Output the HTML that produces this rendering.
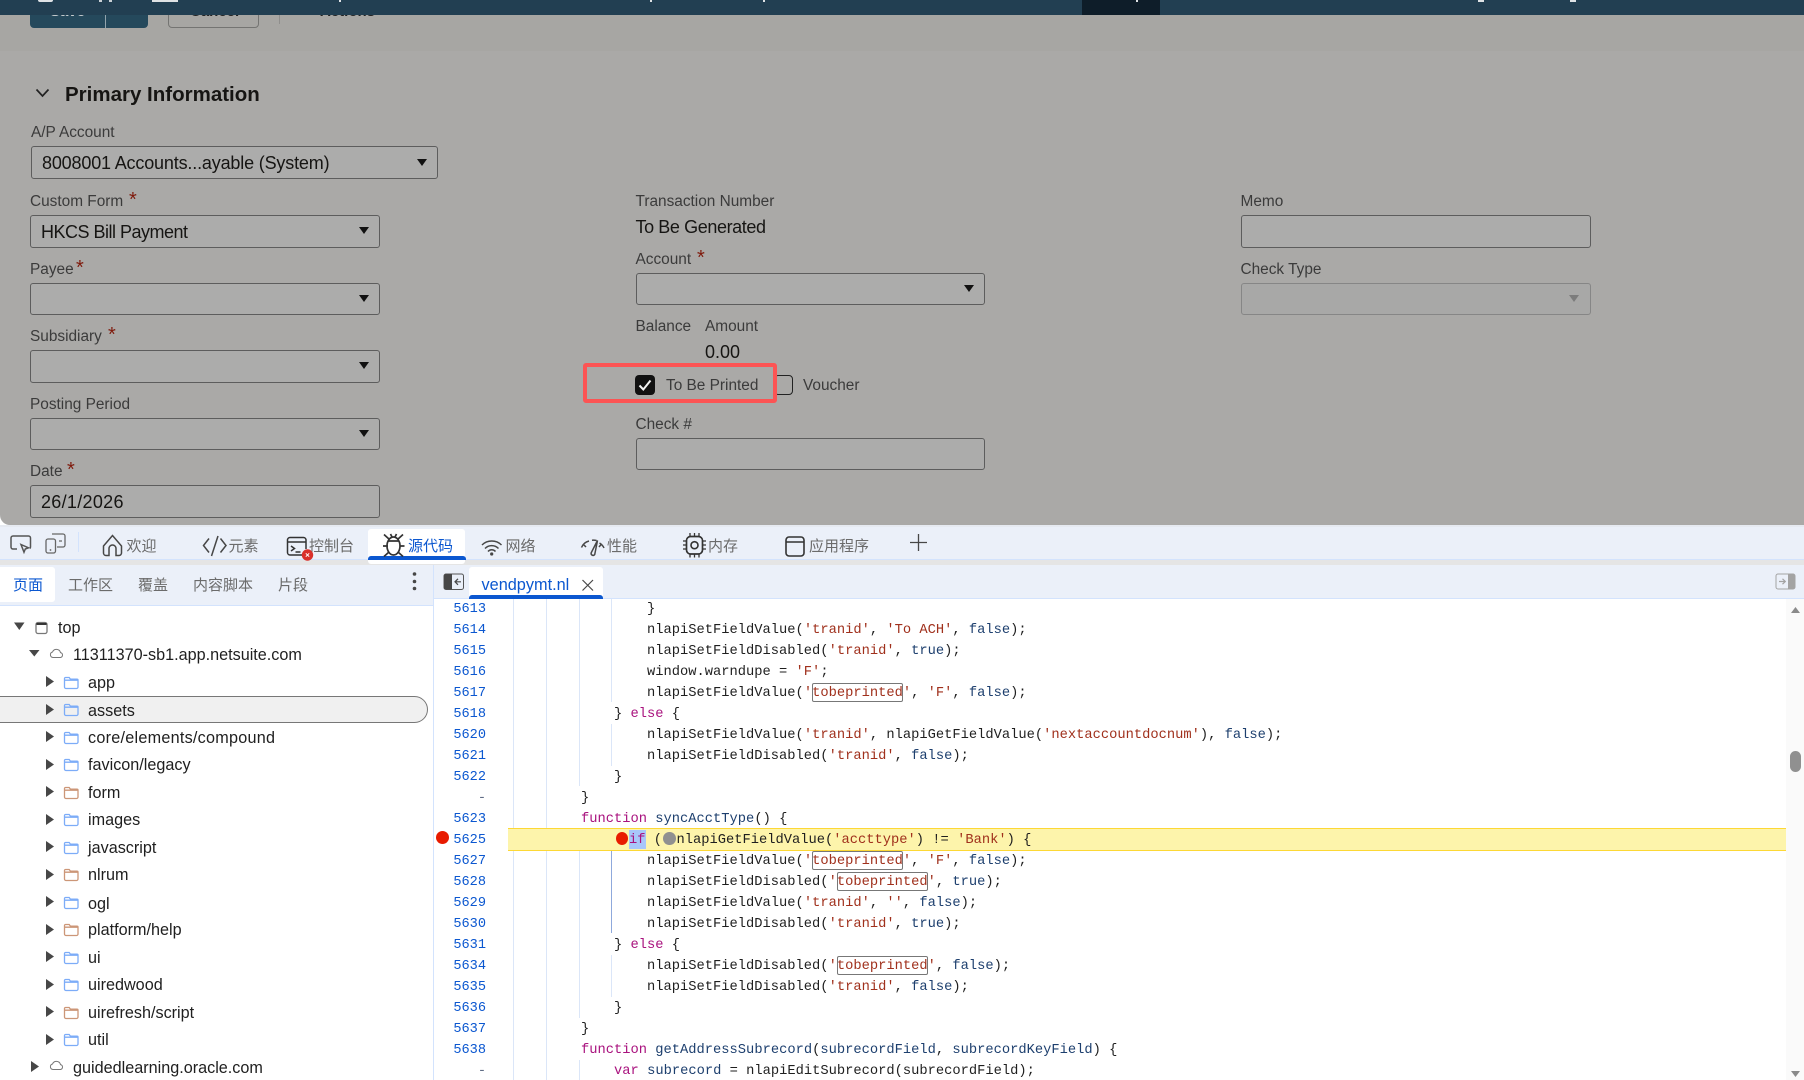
<!DOCTYPE html>
<html><head><meta charset="utf-8"><title>vendpymt</title>
<style>
html,body{margin:0;padding:0;width:1804px;height:1080px;overflow:hidden;background:#fff}
body{position:relative;font-family:"Liberation Sans","Noto Sans CJK SC",sans-serif;color:#1f1f1f}
.a{position:absolute}
.t{position:absolute;white-space:pre;line-height:20px;height:20px}
.l{font-size:15.4px;color:#3b3b3b;margin-top:1px}
.v{font-size:18px;color:#161513}
.st{color:#7f1a0c;font-size:20px;position:absolute;line-height:20px}
.f{position:absolute;box-sizing:border-box;border:1.3px solid #5d5d5d;border-radius:3px;background:#acacab}
.ar{position:absolute;width:0;height:0;border-left:5.5px solid transparent;border-right:5.5px solid transparent;border-top:7.5px solid #111}
.tb{font-size:15px;color:#6b6b6b;font-family:"Liberation Sans","Noto Sans CJK SC",sans-serif;margin-top:1px}
.tr{font-size:16.2px;color:#1f1f1f;margin-top:1px}
.tr.m0{margin-top:0}
.r{position:absolute;left:515px;height:21px;line-height:21px;white-space:pre;font-family:"Liberation Mono",monospace;font-size:13.75px;color:#1f1f1f;margin-top:2px}
.n{position:absolute;left:440px;width:46px;text-align:right;height:21px;line-height:21px;font-family:"Liberation Mono",monospace;font-size:13.6px;color:#0b57d0;margin-top:2px}
.k{color:#a9127e}.s{color:#a0301c}.b{color:#1d3f6e}
.x{display:inline-block;box-sizing:border-box;height:19px;line-height:21px;box-shadow:inset 0 0 0 1px #777;border-radius:2px}
</style></head><body>
<!-- page area -->
<div class="a" style="left:0;top:0;width:1804px;height:525px;background:#aaa9a7;border-radius:0 0 0 10px;overflow:hidden">
 <div class="a" style="left:0;top:0;width:1804px;height:51px;background:#a7a6a3"></div>
 <div class="a" style="left:30px;top:0;width:118px;height:28px;background:#25495c;border-radius:0 0 4px 4px"></div>
 <div class="a" style="left:105px;top:15px;width:1px;height:13px;background:#93a4ad"></div>
 <div class="t" style="left:50px;top:2px;font-size:15px;color:#c7cdd0;font-weight:bold">Save</div>
 <div class="a" style="left:168px;top:0;width:91px;height:28px;box-sizing:border-box;border:1px solid #747472;border-radius:0 0 4px 4px"></div>
 <div class="t" style="left:190px;top:2px;font-size:15px;color:#222;font-weight:bold">Cancel</div>
 <div class="a" style="left:279px;top:10px;width:1px;height:14px;background:#8f8e8c"></div>
 <div class="t" style="left:320px;top:2px;font-size:15px;color:#222;font-weight:bold">Actions</div>
 <div class="a" style="left:0;top:0;width:1804px;height:15px;background:#223f52"></div>
 <div class="a" style="left:1082px;top:0;width:78px;height:15px;background:#0e1d29"></div>
 <div class="a" style="left:38px;top:0;width:15px;height:1.5px;background:#dfe3e6;border-radius:0 0 8px 8px"></div>
 <div class="a" style="left:99px;top:0;width:3px;height:2px;background:#c9d0d5"></div>
 <div class="a" style="left:109px;top:0;width:3px;height:2px;background:#c9d0d5"></div>
 <div class="a" style="left:152px;top:0;width:26px;height:2px;background:#dfe2e4"></div>
 <div class="a" style="left:339px;top:0;width:2px;height:1.5px;background:#dfe3e6"></div>
 <div class="a" style="left:650px;top:0;width:2px;height:1.5px;background:#dfe3e6"></div>
 <div class="a" style="left:763px;top:0;width:2px;height:1.5px;background:#dfe3e6"></div>
 <div class="a" style="left:1136px;top:0;width:2px;height:2px;background:#dfe3e6"></div>
 <div class="a" style="left:1478px;top:0;width:6px;height:1.5px;background:#dfe3e6"></div>
 <div class="a" style="left:1570px;top:0;width:6px;height:1.5px;background:#dfe3e6"></div>

 <svg class="a" style="left:0;top:0" width="100" height="120"><path d="M36.5 89.5l6 6.5 6-6.5" fill="none" stroke="#222" stroke-width="1.7"/></svg>
 <div class="t" style="left:65px;top:84.500px;font-size:20.500px;font-weight:bold;color:#161513">Primary Information</div>

 <div class="t l" style="left:31px;top:122px">A/P Account</div>
 <div class="f" style="left:31px;top:146px;width:407px;height:33px"></div><div class="ar" style="left:417px;top:159px"></div>
 <div class="t v" style="left:42px;top:153px;letter-spacing:-.17px">8008001 Accounts...ayable (System)</div>

 <div class="t l" style="left:30px;top:191px">Custom Form</div><div class="st" style="left:129px;top:190px">*</div>
 <div class="f" style="left:30px;top:215px;width:350px;height:33px"></div><div class="ar" style="left:359px;top:227px"></div>
 <div class="t v" style="left:41px;top:222px;letter-spacing:-.5px">HKCS Bill Payment</div>

 <div class="t l" style="left:30px;top:259px">Payee</div><div class="st" style="left:76px;top:258px">*</div>
 <div class="f" style="left:30px;top:283px;width:350px;height:32px"></div><div class="ar" style="left:359px;top:295px"></div>

 <div class="t l" style="left:30px;top:326px">Subsidiary</div><div class="st" style="left:108px;top:325px">*</div>
 <div class="f" style="left:30px;top:350px;width:350px;height:33px"></div><div class="ar" style="left:359px;top:362px"></div>

 <div class="t l" style="left:30px;top:394px">Posting Period</div>
 <div class="f" style="left:30px;top:418px;width:350px;height:32px"></div><div class="ar" style="left:359px;top:430px"></div>

 <div class="t l" style="left:30px;top:461px">Date</div><div class="st" style="left:67px;top:460px">*</div>
 <div class="f" style="left:30px;top:485px;width:350px;height:33px"></div>
 <div class="t v" style="left:41px;top:492px;letter-spacing:.3px">26/1/2026</div>

 <div class="t l" style="left:635.5px;top:191px">Transaction Number</div>
 <div class="t v" style="left:635.5px;top:217px;letter-spacing:-.4px">To Be Generated</div>
 <div class="t l" style="left:635.5px;top:249px">Account</div><div class="st" style="left:697px;top:248px">*</div>
 <div class="f" style="left:635.5px;top:273px;width:349.5px;height:32px"></div><div class="ar" style="left:964px;top:285px"></div>
 <div class="t l" style="left:635.5px;top:316px">Balance</div>
 <div class="t l" style="left:705px;top:316px">Amount</div>
 <div class="t v" style="left:705px;top:342px">0.00</div>

 <div class="a" style="left:635px;top:375px;width:20px;height:20px;background:#111;border-radius:4px"></div>
 <svg class="a" style="left:635px;top:375px" width="20" height="20"><path d="M4.5 10.5l3.8 4L15.5 5.5" fill="none" stroke="#f2f2f2" stroke-width="2"/></svg>
 <div class="t l" style="left:666px;top:375px">To Be Printed</div>
 <div class="a" style="left:774px;top:375px;width:19px;height:20px;box-sizing:border-box;border:1.3px solid #222;border-radius:4px"></div>
 <div class="t l" style="left:803px;top:375px">Voucher</div>
 <div class="a" style="left:583px;top:363px;width:194px;height:40px;box-sizing:border-box;border:4px solid #fc5454;border-radius:3px"></div>

 <div class="t l" style="left:635.5px;top:414px">Check #</div>
 <div class="f" style="left:635.5px;top:438px;width:349.5px;height:32px"></div>

 <div class="t l" style="left:1240.5px;top:191px">Memo</div>
 <div class="f" style="left:1240.5px;top:215px;width:350px;height:33px"></div>
 <div class="t l" style="left:1240.5px;top:259px">Check Type</div>
 <div class="f" style="left:1240.5px;top:283px;width:350px;height:32px;border-color:#868686;background:#a8a8a7"></div>
 <div class="ar" style="left:1569px;top:295px;border-top-color:#7c7c7c"></div>
</div>

<!-- devtools bars -->
<div class="a" style="left:0;top:525px;width:1804px;height:2px;background:#e6eaf1"></div>
<div class="a" style="left:0;top:527px;width:1804px;height:32px;background:#ebf0f9"></div>
<div class="a" style="left:0;top:559px;width:1804px;height:1px;background:#d3e3fd"></div>
<div class="a" style="left:0;top:560px;width:1804px;height:5px;background:#e5e5e5"></div>
<div class="a" style="left:0;top:565px;width:433px;height:40px;background:#ebf0f9"></div>
<div class="a" style="left:0;top:605px;width:433px;height:1px;background:#d3e3fd"></div>
<div class="a" style="left:433px;top:565px;width:1371px;height:33px;background:#ebf0f9"></div>
<div class="a" style="left:433px;top:598px;width:1371px;height:1px;background:#d3e3fd"></div>
<div class="a" style="left:433px;top:565px;width:1px;height:515px;background:#d3e3fd"></div>

<div class="a" style="left:368px;top:529px;width:97px;height:35px;background:#fff;border-radius:3px"></div>
<div class="a" style="left:367.5px;top:556px;width:98px;height:4px;background:#0b57d0;border-radius:3px 3px 0 0"></div>
<div class="a" style="left:0;top:567px;width:55px;height:35px;background:#fff;border-radius:0 3px 3px 0"></div>
<div class="a" style="left:469px;top:567px;width:134px;height:31px;background:#fff;border-radius:3px 3px 0 0"></div>
<div class="a" style="left:469px;top:595px;width:134px;height:3.5px;background:#0b57d0;border-radius:3px 3px 0 0"></div>

<!-- toolbar labels -->
<div class="t tb" style="left:126.500px;top:536px">欢迎</div>
<div class="t tb" style="left:228.500px;top:536px">元素</div>
<div class="t tb" style="left:309px;top:536px">控制台</div>
<div class="t tb" style="left:408px;top:536px;color:#0b57d0">源代码</div>
<div class="t tb" style="left:505.5px;top:536px">网络</div>
<div class="t tb" style="left:607px;top:536px">性能</div>
<div class="t tb" style="left:708px;top:536px">内存</div>
<div class="t tb" style="left:809px;top:536px">应用程序</div>

<div class="t tb" style="left:13px;top:575px;color:#0b57d0">页面</div>
<div class="t tb" style="left:68px;top:575px">工作区</div>
<div class="t tb" style="left:138px;top:575px">覆盖</div>
<div class="t tb" style="left:193px;top:575px">内容脚本</div>
<div class="t tb" style="left:278px;top:575px">片段</div>

<div class="t" style="left:481.5px;top:575px;font-size:16.300px;color:#0b57d0">vendpymt.nl</div>

<!-- tree -->
<div class="a" style="left:-2px;top:696px;width:430px;height:27px;box-sizing:border-box;background:#f0f0f0;border:1px solid #777;border-radius:0 13.5px 13.5px 0"></div>
<div class="t tr" style="left:58px;top:617px">top</div>
<div class="t tr m0" style="left:73px;top:645px">11311370-sb1.app.netsuite.com</div>
<div class="t tr" style="left:88px;top:672px">app</div>
<div class="t tr" style="left:88px;top:700px">assets</div>
<div class="t tr" style="left:88px;top:727px;letter-spacing:.25px">core/elements/compound</div>
<div class="t tr m0" style="left:88px;top:755px">favicon/legacy</div>
<div class="t tr" style="left:88px;top:782px">form</div>
<div class="t tr m0" style="left:88px;top:810px">images</div>
<div class="t tr" style="left:88px;top:837px">javascript</div>
<div class="t tr m0" style="left:88px;top:865px">nlrum</div>
<div class="t tr" style="left:88px;top:893px">ogl</div>
<div class="t tr m0" style="left:88px;top:920px">platform/help</div>
<div class="t tr m0" style="left:88px;top:948px">ui</div>
<div class="t tr m0" style="left:88px;top:975px">uiredwood</div>
<div class="t tr m0" style="left:88px;top:1003px">uirefresh/script</div>
<div class="t tr m0" style="left:88px;top:1030px">util</div>
<div class="t tr" style="left:73px;top:1057px">guidedlearning.oracle.com</div>

<!-- code area -->
<div class="a" style="left:1786px;top:599px;width:18px;height:481px;background:#fafafa"></div>
<div class="a" style="left:508px;top:828px;width:1278px;height:23px;box-sizing:border-box;background:#fdf4ab;border-top:1px solid #fdd835;border-bottom:1px solid #fdd835"></div>
<div class="a" style="left:513px;top:599px;width:1px;height:229px;background:#dbe6f8"></div>
<div class="a" style="left:513px;top:851px;width:1px;height:229px;background:#dbe6f8"></div>
<div class="a" style="left:546px;top:599px;width:1px;height:229px;background:#dbe6f8"></div>
<div class="a" style="left:546px;top:851px;width:1px;height:229px;background:#dbe6f8"></div>
<div class="a" style="left:578.5px;top:599px;width:1px;height:187px;background:#dbe6f8"></div>
<div class="a" style="left:578.5px;top:851px;width:1px;height:167px;background:#dbe6f8"></div>
<div class="a" style="left:578.5px;top:1060px;width:1px;height:20px;background:#dbe6f8"></div>
<div class="a" style="left:611px;top:599px;width:1px;height:103px;background:#dbe6f8"></div>
<div class="a" style="left:611px;top:724px;width:1px;height:42px;background:#dbe6f8"></div>
<div class="a" style="left:611px;top:851px;width:1px;height:82px;background:#8fa9dc"></div>
<div class="a" style="left:611px;top:955px;width:1px;height:42px;background:#dbe6f8"></div>

<div class="n" style="top:597px">5613</div>
<div class="n" style="top:618px">5614</div>
<div class="n" style="top:639px">5615</div>
<div class="n" style="top:660px">5616</div>
<div class="n" style="top:681px">5617</div>
<div class="n" style="top:702px">5618</div>
<div class="n" style="top:723px">5620</div>
<div class="n" style="top:744px">5621</div>
<div class="n" style="top:765px">5622</div>
<div class="n" style="top:786px;color:#5f6c85">-</div>
<div class="n" style="top:807px">5623</div>
<div class="n" style="top:828px">5625</div>
<div class="n" style="top:849px">5627</div>
<div class="n" style="top:870px">5628</div>
<div class="n" style="top:891px">5629</div>
<div class="n" style="top:912px">5630</div>
<div class="n" style="top:933px">5631</div>
<div class="n" style="top:954px">5634</div>
<div class="n" style="top:975px">5635</div>
<div class="n" style="top:996px">5636</div>
<div class="n" style="top:1017px">5637</div>
<div class="n" style="top:1038px">5638</div>
<div class="n" style="top:1059px;color:#5f6c85">-</div>

<div class="r" style="top:597px">                }</div>
<div class="r" style="top:618px">                nlapiSetFieldValue(<span class="s">'tranid'</span>, <span class="s">'To ACH'</span>, <span class="b">false</span>);</div>
<div class="r" style="top:639px">                nlapiSetFieldDisabled(<span class="s">'tranid'</span>, <span class="b">true</span>);</div>
<div class="r" style="top:660px">                window.warndupe = <span class="s">'F'</span>;</div>
<div class="r" style="top:681px">                nlapiSetFieldValue(<span class="s">'<span class="x">tobeprinted</span>'</span>, <span class="s">'F'</span>, <span class="b">false</span>);</div>
<div class="r" style="top:702px">            } <span class="k">else</span> {</div>
<div class="r" style="top:723px">                nlapiSetFieldValue(<span class="s">'tranid'</span>, nlapiGetFieldValue(<span class="s">'nextaccountdocnum'</span>), <span class="b">false</span>);</div>
<div class="r" style="top:744px">                nlapiSetFieldDisabled(<span class="s">'tranid'</span>, <span class="b">false</span>);</div>
<div class="r" style="top:765px">            }</div>
<div class="r" style="top:786px">        }</div>
<div class="r" style="top:807px">        <span class="k">function</span> <span class="b">syncAcctType</span>() {</div>
<div class="a" style="left:629px;top:830px;width:17px;height:19px;background:#a8c7fa"></div>
<div class="a" style="left:616px;top:832px;width:12px;height:13px;border-radius:50%;background:#e81b00"></div>
<div class="a" style="left:663px;top:832px;width:12.5px;height:13px;border-radius:50%;background:#909090"></div>
<div class="r" style="top:828px;left:629px"><span class="k">if</span> (</div>
<div class="r" style="top:828px;left:676.5px">nlapiGetFieldValue(<span class="s">'accttype'</span>) != <span class="s">'Bank'</span>) {</div>
<div class="r" style="top:849px">                nlapiSetFieldValue(<span class="s">'<span class="x">tobeprinted</span>'</span>, <span class="s">'F'</span>, <span class="b">false</span>);</div>
<div class="r" style="top:870px">                nlapiSetFieldDisabled(<span class="s">'<span class="x">tobeprinted</span>'</span>, <span class="b">true</span>);</div>
<div class="r" style="top:891px">                nlapiSetFieldValue(<span class="s">'tranid'</span>, <span class="s">''</span>, <span class="b">false</span>);</div>
<div class="r" style="top:912px">                nlapiSetFieldDisabled(<span class="s">'tranid'</span>, <span class="b">true</span>);</div>
<div class="r" style="top:933px">            } <span class="k">else</span> {</div>
<div class="r" style="top:954px">                nlapiSetFieldDisabled(<span class="s">'<span class="x">tobeprinted</span>'</span>, <span class="b">false</span>);</div>
<div class="r" style="top:975px">                nlapiSetFieldDisabled(<span class="s">'tranid'</span>, <span class="b">false</span>);</div>
<div class="r" style="top:996px">            }</div>
<div class="r" style="top:1017px">        }</div>
<div class="r" style="top:1038px">        <span class="k">function</span> <span class="b">getAddressSubrecord</span>(<span class="b">subrecordField</span>, <span class="b">subrecordKeyField</span>) {</div>
<div class="r" style="top:1059px">            <span class="k">var</span> <span class="b">subrecord</span> = nlapiEditSubrecord(subrecordField);</div>

<div class="a" style="left:436px;top:831px;width:13px;height:13px;border-radius:50%;background:#e81b00"></div>
<div class="a" style="left:1790px;top:751px;width:11px;height:21px;border-radius:5.5px;background:#909090"></div>

<!-- icons -->
<svg class="a" style="left:0;top:0" width="1804" height="1080" fill="none" stroke="#474747" stroke-width="1.5">
 <defs>
  <g id="fb"><path d="M65.6 1.5h3.6l1.2 1.6h6.6a1 1 0 0 1 1 1V11a1.5 1.5 0 0 1-1.5 1.5H66a1.5 1.5 0 0 1-1.5-1.5V2.6a1 1 0 0 1 1.1-1.1zM64.6 4.2h13.6" stroke-width="1.3"/></g>
  <path id="ra" d="M46 0l8 5.5-8 5.5z" fill="#474747" stroke="none"/>
 </defs>
 <!-- toolbar -->
 <path d="M17 549H13a2 2 0 0 1-2-2V538a2 2 0 0 1 2-2h15.500a2 2 0 0 1 2 2v9a2 2 0 0 1-.7 1.500" stroke="#555"/>
 <path d="M21 544.500l7.500 3.300-3.200 1.200-1.300 3.200z" stroke="#555"/>
 <path d="M52 534h11a2 2 0 0 1 2 2v9a2 2 0 0 1-2 2h-6M59 541h3" stroke="#666" stroke-width="1.300"/>
 <rect x="46" y="539" width="9.500" height="14" rx="2" stroke="#666" stroke-width="1.300"/>
 <circle cx="50.500" cy="550" r=".9" fill="#666" stroke="none"/>
 <path d="M78.500 532v20" stroke="#d3e3fd" stroke-width="1"/>
 <path d="M103.500 546l9-10.500 9 10.500v7a2.500 2.500 0 0 1-2.500 2.500h-3v-7a3.500 3.500 0 0 0-7 0v7h-3a2.500 2.500 0 0 1-2.500-2.500z"/>
 <path d="M209 538.500l-5.500 7 5.500 7M218 536l-6.500 20M220.500 538.500l5.500 7-5.500 7"/>
 <path d="M304 555h-14a2.500 2.500 0 0 1-2.500-2.500V540a2.500 2.500 0 0 1 2.500-2.500h13.500A2.500 2.500 0 0 1 306 540v9M287.500 542h18.500" stroke="#333"/>
 <path d="M291 546l3.500 2.500-3.500 2.500M295.500 552h5" stroke="#333"/>
 <circle cx="307.500" cy="555" r="5.700" fill="#d9302c" stroke="none"/>
 <path d="M305.800 553.300l3.400 3.400m0-3.400l-3.400 3.400" stroke="#fff" stroke-width="1"/>
 <ellipse cx="393.500" cy="546" rx="6.500" ry="9" stroke="#333" stroke-width="1.700"/>
 <path d="M388 541h11M384 534.500l5.500 5M403 534.500l-5.500 5M383 546h5M404.500 546h-5M384 556.500l5-4.500M403 556.500l-5-4.500M390.500 534l1.500 3M396.500 534l-1.500 3" stroke="#333" stroke-width="1.700"/>
 <path d="M482 545a14 14 0 0 1 19.500 0M485 548.500a9.500 9.500 0 0 1 13.500 0M488 551.500a5 5 0 0 1 7.500 0"/>
 <circle cx="491.700" cy="554" r="1.600" fill="#474747" stroke="none"/>
 <path d="M581.500 547.500a11 11 0 0 1 7.500-6.500M592 540.200a12 12 0 0 1 4.500.3M599.500 543a11 11 0 0 1 4.500 5M583 544l3 3M601.500 544l-2.500 3"/>
 <path d="M597.500 540.500l-6.300 12.300a2 2 0 0 0 3.500 1.800z"/>
 <rect x="686.500" y="536.500" width="16" height="17.500" rx="4" stroke-width="1.700" stroke="#333"/>
 <circle cx="694.500" cy="545.200" r="3.500" stroke="#333" stroke-width="1.600"/>
 <path d="M690 533v3M694.500 533v3M699 533v3M690 554.500v3M694.500 554.500v3M699 554.500v3M683 541h3M683 545h3M683 549h3M703 541h3M703 545h3M703 549h3" stroke="#333" stroke-width="1.300"/>
 <rect x="786" y="537" width="18" height="19" rx="3" stroke="#333" stroke-width="1.600"/>
 <path d="M786 542h18" stroke="#333" stroke-width="1.500"/>
 <path d="M910 542.500h17M918.500 534v17" stroke="#474747" stroke-width="1.300"/>
 <!-- panel dots -->
 <circle cx="414.500" cy="574" r="1.800" fill="#474747" stroke="none"/>
 <circle cx="414.500" cy="581.500" r="1.800" fill="#474747" stroke="none"/>
 <circle cx="414.500" cy="588.500" r="1.800" fill="#474747" stroke="none"/>
 <!-- sidebar toggle -->
 <rect x="444" y="574" width="19.500" height="15.500" rx="2" stroke="#555" stroke-width="1"/>
 <path d="M446 574h6v15.500h-6a2 2 0 0 1-2-2V576a2 2 0 0 1 2-2z" fill="#474747" stroke="none"/>
 <path d="M461 581.800h-6M458 578.800l-3 3 3 3" stroke="#474747" stroke-width="1.200"/>
 <rect x="1776" y="574" width="19" height="15" rx="2" stroke="#a3a3a3" stroke-width="1"/>
 <path d="M1788 574h5a2 2 0 0 1 2 2v11a2 2 0 0 1-2 2h-5z" fill="#a3a3a3" stroke="none"/>
 <path d="M1779 581.500h6M1782.500 578.800l2.800 2.700-2.800 2.700" stroke="#a3a3a3" stroke-width="1.200"/>
 <!-- tab close -->
 <path d="M582.500 580l10.500 10.500M593 580l-10.500 10.500" stroke="#474747" stroke-width="1.200"/>
 <!-- scrollbar arrows -->
 <path d="M1791 613l4.500-6 4.500 6z" fill="#8a8a8a" stroke="none"/>
 <path d="M1791 1071l4.500 6 4.500-6z" fill="#8a8a8a" stroke="none"/>
 <!-- tree triangles -->
 <path d="M14 622.500h10.500l-5.200 7.500zM29 650h10.500l-5.200 6.500z" fill="#474747" stroke="none"/>
 <use href="#ra" y="676"/><use href="#ra" y="704"/><use href="#ra" y="731"/><use href="#ra" y="759"/><use href="#ra" y="786"/><use href="#ra" y="814"/><use href="#ra" y="841"/><use href="#ra" y="869"/><use href="#ra" y="896"/><use href="#ra" y="924"/><use href="#ra" y="951"/><use href="#ra" y="979"/><use href="#ra" y="1006"/><use href="#ra" y="1034"/>
 <path d="M31 1061l8 5.500-8 5.500z" fill="#474747" stroke="none"/>
 <!-- top frame -->
 <rect x="36" y="622.500" width="11" height="11" rx="2" stroke="#777" stroke-width="1.300"/>
 <path d="M36.500 624h10" stroke="#222" stroke-width="1.800"/>
 <!-- clouds -->
 <path d="M53 657.500a2.800 2.800 0 0 1-.5-5.500 4.200 4.200 0 0 1 8 .6 2.500 2.500 0 0 1 0 4.900z" stroke="#777" stroke-width="1"/>
 <path d="M53 1069.500a2.800 2.800 0 0 1-.5-5.500 4.200 4.200 0 0 1 8 .6 2.500 2.500 0 0 1 0 4.900z" stroke="#777" stroke-width="1"/>
 <!-- folders -->
 <g stroke="#7cacf8"><use href="#fb" y="676"/><use href="#fb" y="703"/><use href="#fb" y="731"/><use href="#fb" y="758"/></g>
 <g stroke="#cc9677"><use href="#fb" y="786"/></g>
 <g stroke="#7cacf8"><use href="#fb" y="813"/><use href="#fb" y="841"/></g>
 <g stroke="#cc9677"><use href="#fb" y="868"/></g>
 <g stroke="#7cacf8"><use href="#fb" y="896"/></g>
 <g stroke="#cc9677"><use href="#fb" y="923"/></g>
 <g stroke="#7cacf8"><use href="#fb" y="951"/><use href="#fb" y="978"/></g>
 <g stroke="#cc9677"><use href="#fb" y="1006"/></g>
 <g stroke="#7cacf8"><use href="#fb" y="1033"/></g>
</svg>
</body></html>
